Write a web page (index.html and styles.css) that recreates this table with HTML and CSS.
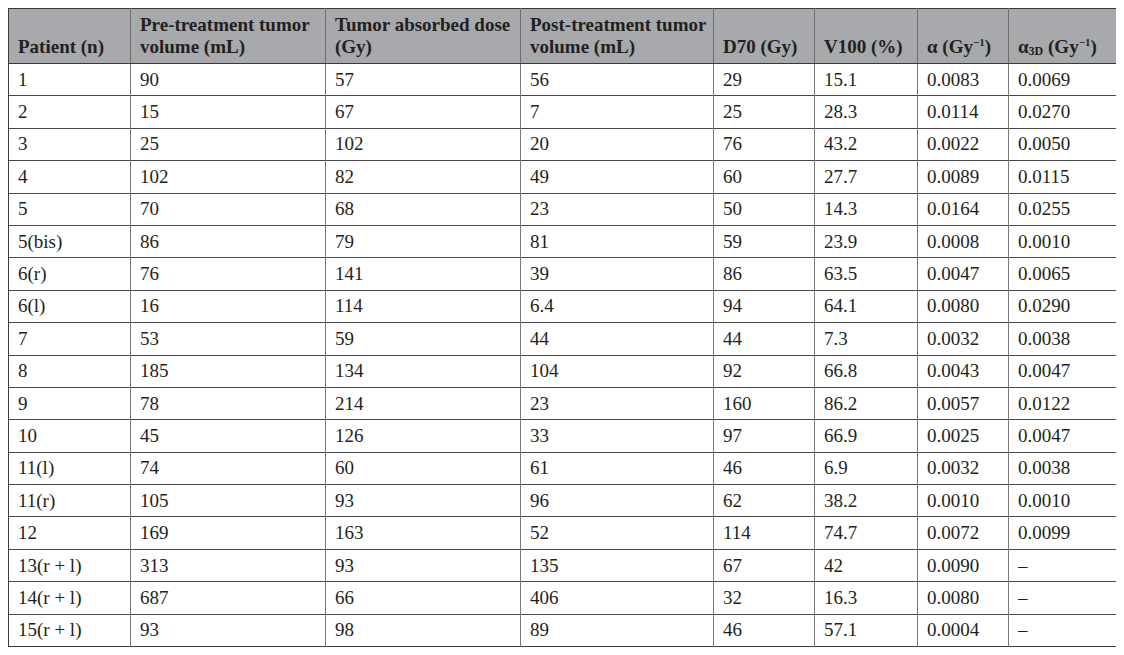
FILE: index.html
```html
<!DOCTYPE html>
<html>
<head>
<meta charset="utf-8">
<link rel="stylesheet" href="styles.css">
</head>
<body>
<table class="data">
<colgroup>
<col class="c1"><col class="c2"><col class="c3"><col class="c4"><col class="c5"><col class="c6"><col class="c7"><col class="c8">
</colgroup>
<thead>
<tr>
<th>Patient (n)</th>
<th>Pre-treatment tumor volume (mL)</th>
<th>Tumor absorbed dose (Gy)</th>
<th>Post-treatment tumor volume (mL)</th>
<th>D70 (Gy)</th>
<th>V100 (%)</th>
<th>α (Gy<sup>−1</sup>)</th>
<th>α<sub>3D</sub> (Gy<sup>−1</sup>)</th>
</tr>
</thead>
<tbody>
<tr><td>1</td><td>90</td><td>57</td><td>56</td><td>29</td><td>15.1</td><td>0.0083</td><td>0.0069</td></tr>
<tr><td>2</td><td>15</td><td>67</td><td>7</td><td>25</td><td>28.3</td><td>0.0114</td><td>0.0270</td></tr>
<tr><td>3</td><td>25</td><td>102</td><td>20</td><td>76</td><td>43.2</td><td>0.0022</td><td>0.0050</td></tr>
<tr><td>4</td><td>102</td><td>82</td><td>49</td><td>60</td><td>27.7</td><td>0.0089</td><td>0.0115</td></tr>
<tr><td>5</td><td>70</td><td>68</td><td>23</td><td>50</td><td>14.3</td><td>0.0164</td><td>0.0255</td></tr>
<tr><td>5(bis)</td><td>86</td><td>79</td><td>81</td><td>59</td><td>23.9</td><td>0.0008</td><td>0.0010</td></tr>
<tr><td>6(r)</td><td>76</td><td>141</td><td>39</td><td>86</td><td>63.5</td><td>0.0047</td><td>0.0065</td></tr>
<tr><td>6(l)</td><td>16</td><td>114</td><td>6.4</td><td>94</td><td>64.1</td><td>0.0080</td><td>0.0290</td></tr>
<tr><td>7</td><td>53</td><td>59</td><td>44</td><td>44</td><td>7.3</td><td>0.0032</td><td>0.0038</td></tr>
<tr><td>8</td><td>185</td><td>134</td><td>104</td><td>92</td><td>66.8</td><td>0.0043</td><td>0.0047</td></tr>
<tr><td>9</td><td>78</td><td>214</td><td>23</td><td>160</td><td>86.2</td><td>0.0057</td><td>0.0122</td></tr>
<tr><td>10</td><td>45</td><td>126</td><td>33</td><td>97</td><td>66.9</td><td>0.0025</td><td>0.0047</td></tr>
<tr><td>11(l)</td><td>74</td><td>60</td><td>61</td><td>46</td><td>6.9</td><td>0.0032</td><td>0.0038</td></tr>
<tr><td>11(r)</td><td>105</td><td>93</td><td>96</td><td>62</td><td>38.2</td><td>0.0010</td><td>0.0010</td></tr>
<tr><td>12</td><td>169</td><td>163</td><td>52</td><td>114</td><td>74.7</td><td>0.0072</td><td>0.0099</td></tr>
<tr><td>13(r + l)</td><td>313</td><td>93</td><td>135</td><td>67</td><td>42</td><td>0.0090</td><td>–</td></tr>
<tr><td>14(r + l)</td><td>687</td><td>66</td><td>406</td><td>32</td><td>16.3</td><td>0.0080</td><td>–</td></tr>
<tr><td>15(r + l)</td><td>93</td><td>98</td><td>89</td><td>46</td><td>57.1</td><td>0.0004</td><td>–</td></tr>
</tbody>
</table>
</body>
</html>
```

FILE: styles.css
```css
html, body {
  background: #ffffff;
}
body {
  margin: 8px;
  font-family: "Liberation Serif", "DejaVu Serif", serif;
  color: #231f20;
}
.data {
  border-collapse: collapse;
  table-layout: fixed;
  width: 1108px;
  font-size: 19px;
  border: 1px solid #3a3a3a;
}
.c1 { width: 122px; }
.c2 { width: 195px; }
.c3 { width: 195px; }
.c4 { width: 193px; }
.c5 { width: 101px; }
.c6 { width: 103px; }
.c7 { width: 91px; }
.c8 { width: 108px; }
.data th {
  background: #a7a9ac;
  text-align: left;
  vertical-align: bottom;
  font-weight: bold;
  line-height: 22px;
  padding: 3px 4px 5px 9px;
  height: 55px;
  box-sizing: border-box;
  border-left: 1px solid #6e6e6e;
  border-bottom: 1px solid #3a3a3a;
  white-space: normal;
}
.data td {
  height: 32.4px;
  box-sizing: border-box;
  padding: 0 9px;
  line-height: 22px;
  vertical-align: middle;
  border-left: 1px solid #7a7a7a;
  border-top: 1px solid #4a4a4a;
}
.data th:first-child, .data td:first-child {
  border-left: 1px solid #3a3a3a;
}
.data sup {
  font-size: 11px;
  line-height: 0;
  vertical-align: 7px;
}
.data sub {
  font-size: 12px;
  line-height: 0;
  vertical-align: -2px;
}
```
